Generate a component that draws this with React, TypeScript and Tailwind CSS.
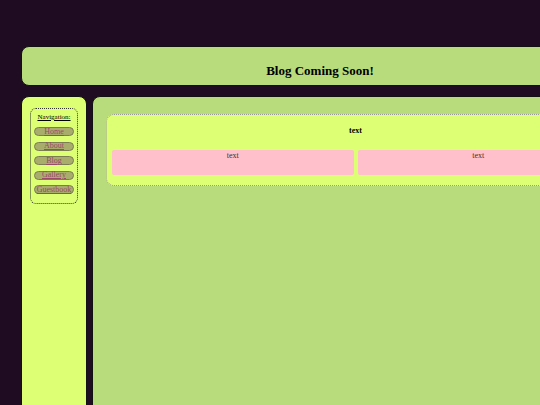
import React from "react";

const links = ["Home", "About", "Blog", "Gallery", "Guestbook"];

export default function App() {
  return (
    <div
      className="min-h-screen w-[640px] bg-[#1f0b22] px-[21px] pt-[46px]"
      style={{ fontFamily: '"Liberation Serif", "Times New Roman", serif' }}
    >
      <header className="flex h-[40px] items-center justify-center rounded-[8px] border border-[#111] bg-[#b8dc7c] pt-[9px]">
        <h1 className="text-[13px] font-bold leading-none text-black">Blog Coming Soon!</h1>
      </header>
      <div className="mt-[10px] flex gap-[5px]">
        <aside className="min-h-[320px] w-[66px] shrink-0 rounded-[8px] border border-[#111] bg-[#ddff73] px-[8px] pt-[11px]">
          <nav className="flex flex-col items-center rounded-[6px] border border-dotted border-[#333] pb-[9px] pt-[4px]">
            <div className="text-[7px] leading-[8px] text-black underline">Navigation:</div>
            <div className="mt-[6px] flex flex-col items-center gap-[5.5px]">
              {links.map((l) => (
                <a
                  key={l}
                  href="#"
                  className="flex h-[9px] w-[40px] items-center justify-center rounded-full border border-[#7d7d55] bg-[#a9ad6c] text-[8px] leading-[8px] text-[#9a4a6a] underline decoration-[0.5px]"
                >
                  {l}
                </a>
              ))}
            </div>
          </nav>
        </aside>
        <main className="min-h-[320px] flex-1 rounded-[8px] border border-[#111] bg-[#b8dc7c] px-[13px] pt-[17px]">
          <section className="rounded-[8px] border border-dotted border-[#999] bg-[#ddff73] px-[5px] pb-[10px] pt-[11px]">
            <h2 className="text-center text-[8px] font-bold leading-[10px] text-black">text</h2>
            <div className="mt-[14px] flex gap-[4px]">
              <div className="h-[25px] flex-1 rounded-[2px] bg-[#ffc0cb] pt-[1px] text-center text-[8px] leading-[10px] text-[#333]">text</div>
              <div className="h-[25px] flex-1 rounded-[2px] bg-[#ffc0cb] pt-[1px] text-center text-[8px] leading-[10px] text-[#333]">text</div>
            </div>
          </section>
        </main>
      </div>
    </div>
  );
}
